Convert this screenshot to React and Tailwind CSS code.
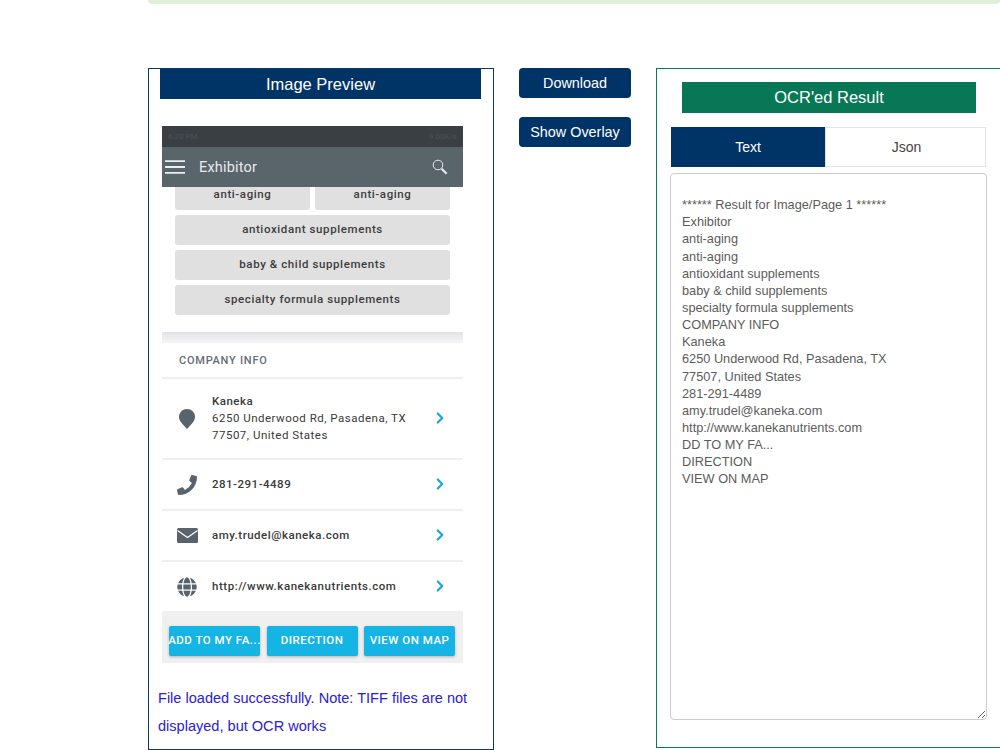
import { ChevronRight } from 'lucide-react'
import { FaPhoneAlt, FaGlobe } from 'react-icons/fa'

const OCR_TEXT = `
****** Result for Image/Page 1 ******
Exhibitor
anti-aging
anti-aging
antioxidant supplements
baby & child supplements
specialty formula supplements
COMPANY INFO
Kaneka
6250 Underwood Rd, Pasadena, TX
77507, United States
281-291-4489
amy.trudel@kaneka.com
http://www.kanekanutrients.com
DD TO MY FA...
DIRECTION
VIEW ON MAP`

function Chip({ label, className = '' }) {
  return (
    <div className={`flex items-center justify-center rounded-[3px] bg-[#e0e0e0] text-[11.5px] font-medium tracking-[0.6px] text-[#3d3d3d] ${className}`}>
      {label}
    </div>
  )
}

function InfoRow({ icon, children, className = '' }) {
  return (
    <div className={`flex items-center border-b-2 border-[#efefef] pl-[14px] pr-[14px] ${className}`}>
      <div className="flex w-[22px] justify-center text-[#58636b]">{icon}</div>
      <div className="ml-[14px] flex-1 text-[11.5px] leading-[17px] tracking-[0.5px] text-[#3a3a3a]">{children}</div>
      <ChevronRight size={18} strokeWidth={3} className="-mt-[1px] text-[#1ba6d8]" />
    </div>
  )
}

function PhonePreview() {
  return (
    <div className="ml-[13px] mt-[27px] w-[301px] font-['Roboto',sans-serif]">
      <div className="flex h-[21px] items-center justify-between bg-[#3a3f43] px-[6px] text-[8px] text-[#4d5257]">
        <span>6:20 PM</span>
        <span>9.00K/s</span>
      </div>
      <div className="flex h-[40px] items-center bg-[#5a646b] pl-[3px] pr-[15px] text-white">
        <svg width="20" height="14" viewBox="0 0 20 14" className="text-[#eceeef]">
          <path d="M0 1.2h20M0 7h20M0 12.8h20" stroke="currentColor" strokeWidth="1.8" />
        </svg>
        <span className="ml-[14px] flex-1 pt-[2px] text-[14.5px] tracking-[0.2px] text-[#e8eaeb]">Exhibitor</span>
        <svg width="16" height="17" viewBox="0 0 16 17" fill="none" className="text-[#e8eaeb]">
          <circle cx="6" cy="6" r="4.8" stroke="currentColor" strokeWidth="1" />
          <path d="M9.6 9.8l5 5" stroke="currentColor" strokeWidth="2.2" />
        </svg>
      </div>

      <div className="flex flex-col gap-[5px] pl-[13px] pr-[13px]">
        <div className="flex gap-[5px]">
          <Chip label="anti-aging" className="h-[23px] w-[135px] rounded-t-none pb-[8px]" />
          <Chip label="anti-aging" className="h-[23px] w-[135px] rounded-t-none pb-[8px]" />
        </div>
        <Chip label="antioxidant supplements" className="h-[30px] w-[275px] pb-[1px]" />
        <Chip label="baby & child supplements" className="h-[30px] w-[275px] pb-[1px]" />
        <Chip label="specialty formula supplements" className="h-[30px] w-[275px] pb-[1px]" />
      </div>

      <div className="mt-[17px] h-[11px] bg-gradient-to-b from-[#e2e2e6] to-[#f6f6f7]" />

      <div className="flex h-[36px] items-center border-b-2 border-[#efefef] pl-[17px] pt-[2px] text-[11px] font-medium tracking-[0.75px] text-[#666d73]">
        COMPANY INFO
      </div>

      <InfoRow
        className="h-[81px]"
        icon={
          <svg width="16" height="20" viewBox="0 0 16 20" fill="currentColor">
            <path d="M8 0C3.6 0 0 3.4 0 7.8c0 2.6 1.2 4.4 2.8 6.4L8 20l5.2-5.8c1.6-2 2.8-3.8 2.8-6.4C16 3.4 12.4 0 8 0z" />
          </svg>
        }
      >
        <div className="font-medium">Kaneka</div>
        <div>6250 Underwood Rd, Pasadena, TX</div>
        <div>77507, United States</div>
      </InfoRow>
      <InfoRow className="h-[51px]" icon={<FaPhoneAlt size={20} className="-scale-x-100" />}>
        <span className="font-medium">281-291-4489</span>
      </InfoRow>
      <InfoRow
        className="h-[51px]"
        icon={
          <svg width="21" height="15" viewBox="0 0 21 15">
            <rect width="21" height="15" rx="1.5" fill="currentColor" />
            <path d="M0.5 2.5L10.5 9.5L20.5 2.5" fill="none" stroke="#fff" strokeWidth="1.2" />
          </svg>
        }
      >
        <span className="font-medium">amy.trudel@kaneka.com</span>
      </InfoRow>
      <InfoRow className="h-[51px] border-b-0" icon={<FaGlobe size={20} />}>
        <span className="font-medium tracking-[0.55px]">http://www.kanekanutrients.com</span>
      </InfoRow>

      <div className="flex h-[50px] items-end gap-[6.5px] bg-[#f0f0f1] px-[7px] pb-[7px]">
        {['ADD TO MY FA...', 'DIRECTION', 'VIEW ON MAP'].map(label => (
          <div key={label} className="flex h-[30px] w-[91px] items-center justify-center rounded-[2px] bg-[#14b4e4] text-[11.5px] font-medium tracking-[0.5px] whitespace-nowrap text-white shadow-[0_1px_3px_rgba(0,0,0,0.25)]">
            {label}
          </div>
        ))}
      </div>
    </div>
  )
}

export default function App() {
  return (
    <div className="h-[750px] w-[1000px] overflow-hidden bg-white font-['Liberation_Sans',sans-serif]">
      <div className="ml-[148px] h-[4px] rounded-b-[4px] bg-[#dff0d8]" />

      <div className="mt-[64px] flex items-start pl-[148px]">
        {/* Preview panel */}
        <div className="h-[682px] w-[346px] shrink-0 border border-[#0a3a66]">
          <div className="ml-[11px] flex h-[30px] w-[321px] items-center justify-center bg-[#003366] pt-[1px] text-[16.5px] text-white">
            Image Preview
          </div>
          <PhonePreview />
          <p className="ml-[9px] mt-[22px] w-[325px] text-[14.55px] leading-[27.5px] text-[#2a20d4]">
            File loaded successfully. Note: TIFF files are not displayed, but OCR works
          </p>
        </div>

        {/* Actions */}
        <div className="ml-[25px] flex w-[112px] shrink-0 flex-col gap-[19px]">
          <button className="h-[30px] rounded-[4px] bg-[#003366] pt-[2px] text-[14.4px] text-white">Download</button>
          <button className="h-[30px] rounded-[4px] bg-[#003366] pt-[2px] text-[14.4px] text-white">Show Overlay</button>
        </div>

        {/* Result panel */}
        <div className="ml-[25px] h-[680px] w-[360px] shrink-0 border border-[#0b7a58]">
          <div className="ml-[25px] mt-[13px] flex h-[31px] w-[294px] items-center justify-center bg-[#087755] text-[16.5px] text-white">
            OCR'ed Result
          </div>
          <div className="ml-[14px] mt-[14px] flex h-[40px] w-[315px] text-[14px]">
            <div className="flex w-[154px] items-center justify-center bg-[#003366] text-white">Text</div>
            <div className="flex flex-1 items-center justify-center border border-[#e4e4e4] pl-[2px] text-[#444]">Json</div>
          </div>
          <textarea
            readOnly
            value={OCR_TEXT}
            className="ml-[13px] mt-[6px] block h-[547px] w-[317px] rounded-[4px] border border-[#ccc] px-[11px] py-[5px] text-[12.75px] leading-[17.14px] text-[#5c5c5c] outline-none"
          />
        </div>
      </div>
    </div>
  )
}
